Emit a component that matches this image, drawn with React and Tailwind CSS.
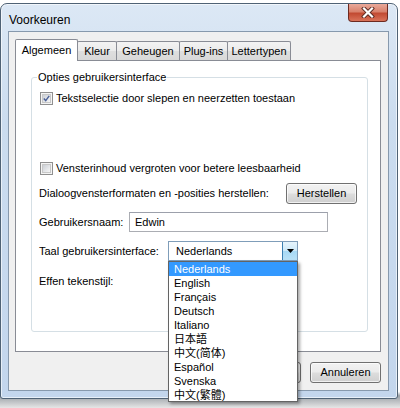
import React from 'react';

const FONT = "font-['Liberation_Sans',Arial,'Noto_Sans_CJK_SC',sans-serif]";

const TABS = [
  { label: 'Algemeen', w: 'w-[63px]', active: true },
  { label: 'Kleur', w: 'w-[40px]' },
  { label: 'Geheugen', w: 'w-[64px]' },
  { label: 'Plug-ins', w: 'w-[49px]' },
  { label: 'Lettertypen', w: 'w-[64px]' },
];

const LANGS = ['Nederlands', 'English', 'Français', 'Deutsch', 'Italiano', '日本語', '中文(简体)', 'Español', 'Svenska', '中文(繁體)'];

const VistaButton = ({ children, className = '' }) => (
  <div className={`h-[21px] w-[71px] shrink-0 flex items-center justify-center rounded-[3px] border border-[#707070] bg-[linear-gradient(to_bottom,#f2f2f2_0%,#ebebeb_48%,#dddddd_52%,#cfcfcf_100%)] shadow-[inset_0_0_0_1px_rgba(255,255,255,0.7)] text-[11px] text-black ${className}`}>
    {children}
  </div>
);

const Checkbox = ({ checked, label }) => (
  <div className="h-[15px] flex items-center">
    <div className="ml-px w-[13px] h-[13px] border border-[#8f8f8f] bg-[#f4f4f4] p-px">
      <div className="w-full h-full border border-[#c8c8c8] bg-[linear-gradient(135deg,#cbcfd5,#f7f7f7)] flex items-center justify-center">
        {checked && (
          <svg width="9" height="9" viewBox="0 0 9 9">
            <path d="M1 4.5 L3.5 7.2 L8 1.2" fill="none" stroke="#4a5f97" strokeWidth="1.8" />
          </svg>
        )}
      </div>
    </div>
    <span className="ml-[3px] text-[11px] leading-[15px] whitespace-nowrap">{label}</span>
  </div>
);

export default function App() {
  return (
    <div className={`w-[400px] h-[408px] overflow-hidden bg-[linear-gradient(to_bottom,#ffffff_0%,#ffffff_96%,#9aa0a6_97%,#e6e6e6_100%)] ${FONT} text-black`}>
      {/* window */}
      <div className="mt-[3px] w-[398px] h-[396px] rounded-t-[7px] rounded-b-[3px] border border-[#4f6275] bg-[linear-gradient(to_bottom,#dce8f5_0%,#cbdcef_30%,#c3d6ed_100%)] shadow-[inset_0_0_0_1px_rgba(255,255,255,0.6)] flex flex-col">
        {/* title bar */}
        <div className="h-[27px] flex items-start">
          <div className="flex-1 pl-[8px] pt-[9px] text-[12px] leading-[15px] text-black">Voorkeuren</div>
          <div className="mr-[9px] w-[40px] h-[18px] rounded-b-[4px] border border-t-0 border-[#6d2a20] bg-[linear-gradient(to_bottom,#e9a99a_0%,#d9826d_45%,#c24a32_55%,#d9735a_100%)] flex items-center justify-center">
            <svg width="14" height="11" viewBox="0 0 14 11">
              <path d="M3 1.5 L11 9.5 M11 1.5 L3 9.5" stroke="#5a2a22" strokeWidth="4" strokeLinecap="square" />
              <path d="M3 1.5 L11 9.5 M11 1.5 L3 9.5" stroke="#ffffff" strokeWidth="2.2" strokeLinecap="square" />
            </svg>
          </div>
        </div>

        {/* client area */}
        <div className="ml-[7px] w-[381px] h-[360px] border border-[#8799ad] bg-[#f0f0f0] flex flex-col">
          <div className="pl-[6px] pt-[6px]">
            {/* tabs */}
            <div className="h-[22px] flex items-end">
              {TABS.map((t) =>
                t.active ? (
                  <div key={t.label} className={`${t.w} h-[22px] -mb-px relative z-10 bg-white border border-b-0 border-[#898c95] rounded-t-[2px] flex items-center justify-center text-[11px] leading-[15px]`}>
                    {t.label}
                  </div>
                ) : (
                  <div key={t.label} className={`${t.w} h-[19px] -ml-px border border-b-0 border-[#898c95] rounded-t-[2px] bg-[linear-gradient(to_bottom,#f3f3f3_0%,#ebebeb_50%,#dedede_51%,#d9d9d9_100%)] flex items-center justify-center text-[11px] leading-[15px]`}>
                    {t.label}
                  </div>
                )
              )}
            </div>

            {/* tab panel */}
            <div className="w-[366px] h-[292px] bg-white border border-[#898c95] pt-[16px] pl-[15px]">
              <div className="relative w-[337px] h-[255px] border border-[#d5dfe5] rounded-[3px] pl-[7px]">
                <div className="absolute -top-[8px] left-[5px] px-[1px] bg-white text-[11px] leading-[15px] whitespace-nowrap">Opties gebruikersinterface</div>

                <div className="mt-[13px]">
                  <Checkbox checked label="Tekstselectie door slepen en neerzetten toestaan" />
                </div>
                <div className="mt-[55px]">
                  <Checkbox label="Vensterinhoud vergroten voor betere leesbaarheid" />
                </div>

                <div className="mt-[7px] h-[21px] flex items-center justify-between pr-[10px]">
                  <span className="text-[11px] leading-[15px] whitespace-nowrap">Dialoogvensterformaten en -posities herstellen:</span>
                  <VistaButton className="w-[68px]">Herstellen</VistaButton>
                </div>

                <div className="mt-[8px] h-[20px] flex items-center">
                  <span className="w-[90px] shrink-0 text-[11px] leading-[15px] whitespace-nowrap">Gebruikersnaam:</span>
                  <div className="w-[199px] h-[20px] border border-[#abadb3] border-t-[#9ca0ab] bg-white pl-[5px] flex items-center text-[11px]">Edwin</div>
                </div>

                <div className="mt-[9px] h-[20px] flex items-center">
                  <span className="w-[129px] shrink-0 text-[11px] leading-[15px] whitespace-nowrap">Taal gebruikersinterface:</span>
                  <div className="relative w-[130px] h-[20px] border border-[#7f9db9] bg-white flex items-center">
                    <span className="flex-1 pl-[7px] text-[11px]">Nederlands</span>
                    <div className="w-[15px] h-[18px] border-l border-[#3c7fb1] bg-[linear-gradient(to_bottom,#e6f4fc_0%,#cde9f8_50%,#a7d9f5_51%,#b9e1f7_100%)] flex items-center justify-center">
                      <svg width="7" height="4" viewBox="0 0 7 4">
                        <path d="M0 0 H7 L3.5 4 Z" fill="#000" />
                      </svg>
                    </div>

                    {/* dropdown list */}
                    <div className="absolute left-[-1px] top-[19px] z-50 w-[130px] h-[141px] border border-[#646464] bg-white shadow-[2px_2px_3px_rgba(0,0,0,0.35)] flex flex-col">
                      {LANGS.map((l, i) => (
                        <div key={l} className={`h-[14px] pl-[5px] text-[11px] leading-[14px] whitespace-nowrap ${i === 0 ? 'bg-[#3399ff] text-white' : 'text-black'}`}>{l}</div>
                      ))}
                    </div>
                  </div>
                </div>

                <div className="mt-[13px] h-[15px] text-[11px] leading-[15px]">Effen tekenstijl:</div>
              </div>
            </div>
          </div>

          {/* bottom buttons */}
          <div className="mt-[10px] pr-[7px] flex justify-end gap-[9px]">
            <VistaButton>OK</VistaButton>
            <VistaButton>Annuleren</VistaButton>
          </div>
        </div>
      </div>
    </div>
  );
}
